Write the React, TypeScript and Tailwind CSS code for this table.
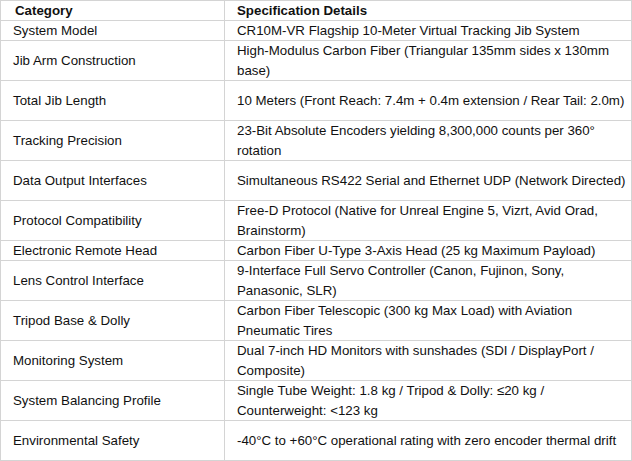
import React from 'react';

type Row = { label: string; lines: string[]; tall: boolean };

const ROWS: Row[] = [
  { label: 'System Model', lines: ['CR10M-VR Flagship 10-Meter Virtual Tracking Jib System'], tall: false },
  { label: 'Jib Arm Construction', lines: ['High-Modulus Carbon Fiber (Triangular 135mm sides x 130mm', 'base)'], tall: true },
  { label: 'Total Jib Length', lines: ['10 Meters (Front Reach: 7.4m + 0.4m extension / Rear Tail: 2.0m)'], tall: true },
  { label: 'Tracking Precision', lines: ['23-Bit Absolute Encoders yielding 8,300,000 counts per 360°', 'rotation'], tall: true },
  { label: 'Data Output Interfaces', lines: ['Simultaneous RS422 Serial and Ethernet UDP (Network Directed)'], tall: true },
  { label: 'Protocol Compatibility', lines: ['Free-D Protocol (Native for Unreal Engine 5, Vizrt, Avid Orad,', 'Brainstorm)'], tall: true },
  { label: 'Electronic Remote Head', lines: ['Carbon Fiber U-Type 3-Axis Head (25 kg Maximum Payload)'], tall: false },
  { label: 'Lens Control Interface', lines: ['9-Interface Full Servo Controller (Canon, Fujinon, Sony,', 'Panasonic, SLR)'], tall: true },
  { label: 'Tripod Base & Dolly', lines: ['Carbon Fiber Telescopic (300 kg Max Load) with Aviation', 'Pneumatic Tires'], tall: true },
  { label: 'Monitoring System', lines: ['Dual 7-inch HD Monitors with sunshades (SDI / DisplayPort /', 'Composite)'], tall: true },
  { label: 'System Balancing Profile', lines: ['Single Tube Weight: 1.8 kg / Tripod & Dolly: ≤20 kg /', 'Counterweight: <123 kg'], tall: true },
  { label: 'Environmental Safety', lines: ['-40°C to +60°C operational rating with zero encoder thermal drift'], tall: true },
];

const cell = 'flex items-center border-r border-b border-[#d4d4d4] whitespace-nowrap overflow-hidden';

export default function App() {
  return (
    <div className="w-[632px] h-[461px] bg-white">
      <div
        className="w-[632px] border-l border-t border-[#d4d4d4] text-[13.3px] leading-[20px] text-[#111]"
        style={{ fontFamily: '"Liberation Sans", Arial, sans-serif' }}
      >
        <div className="grid grid-cols-[224px_407px] h-[20px] font-bold">
          <div className={`${cell} pl-[14px]`}>Category</div>
          <div className={`${cell} pl-[12px]`}>Specification Details</div>
        </div>
        {ROWS.map((r) => (
          <div key={r.label} className={`grid grid-cols-[224px_407px] ${r.tall ? 'h-[40px]' : 'h-[20px]'}`}>
            <div className={`${cell} pl-[12px]`}>{r.label}</div>
            <div className={`${cell} pl-[12px]`}>
              <div>
                {r.lines.map((l) => (
                  <div key={l}>{l}</div>
                ))}
              </div>
            </div>
          </div>
        ))}
      </div>
    </div>
  );
}
